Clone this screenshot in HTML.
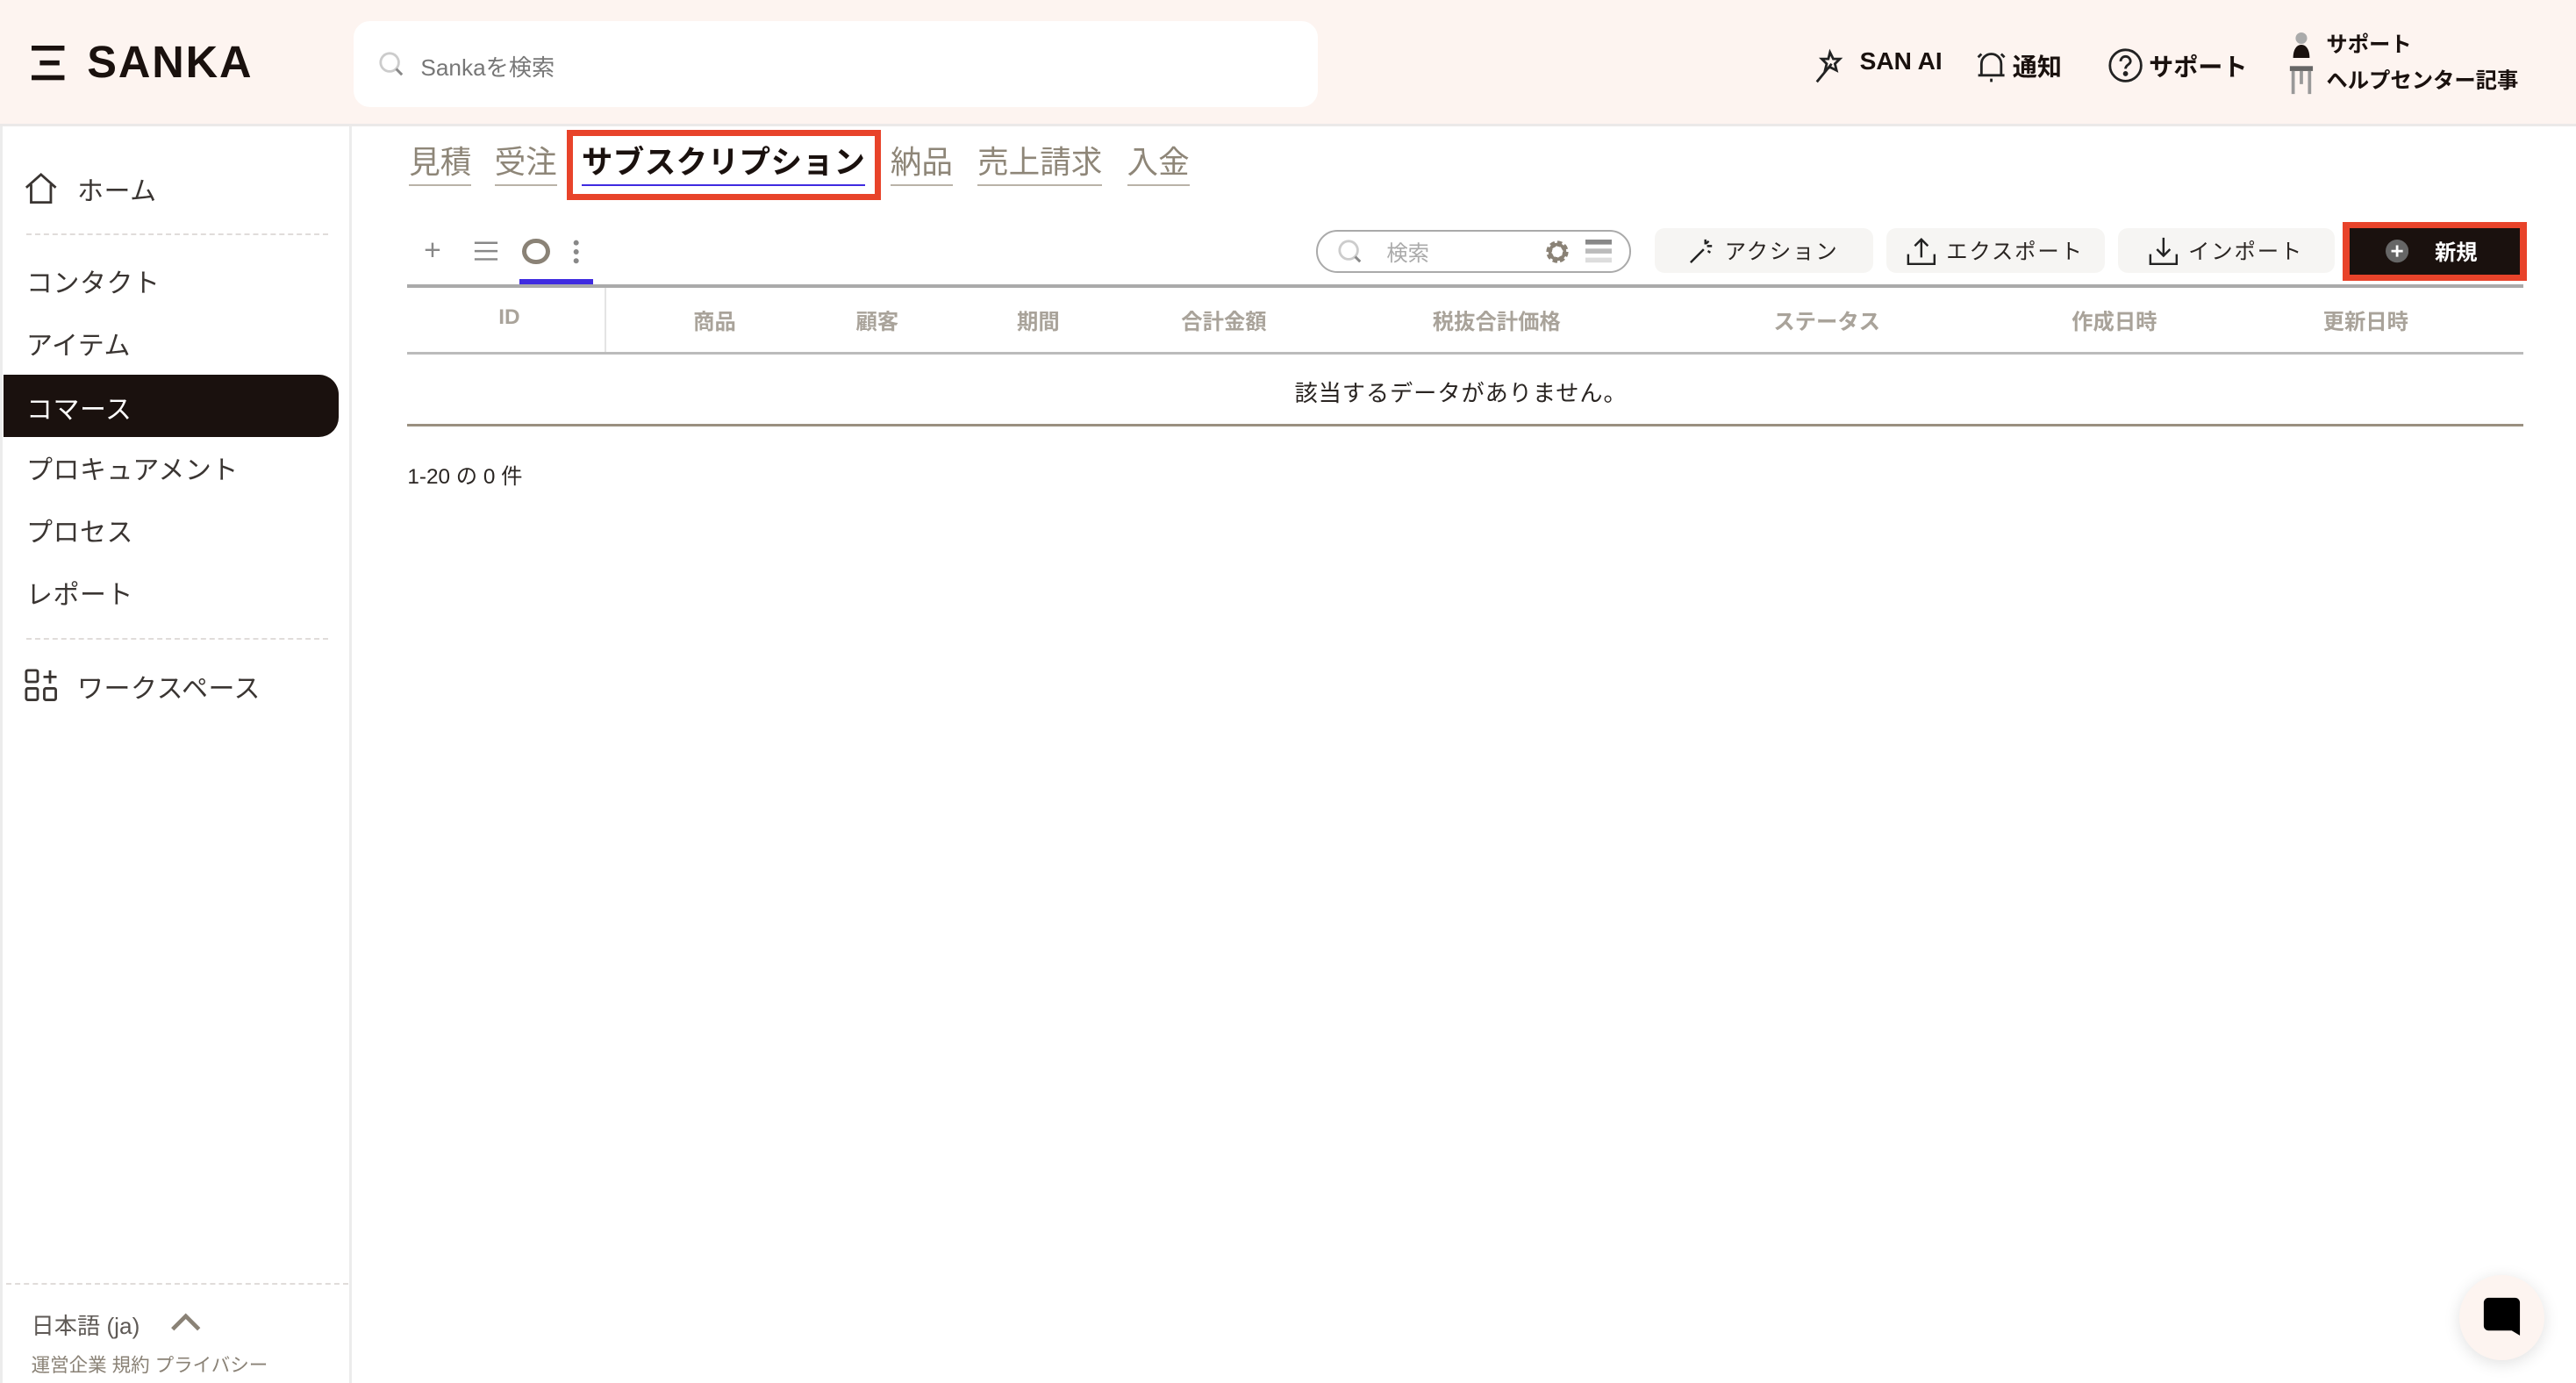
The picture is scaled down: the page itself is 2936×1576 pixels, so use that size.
<!DOCTYPE html>
<html><head><meta charset="utf-8"><style>
*{margin:0;padding:0;box-sizing:border-box}
html,body{width:2936px;height:1576px;overflow:hidden;background:#fff}
#r{zoom:1.87245;width:1568px;height:842px;position:relative;font-family:"Liberation Sans","Noto Sans CJK JP",sans-serif;color:#2a2522}
.a{position:absolute;white-space:nowrap}
.hdr{left:0;top:0;width:1568px;height:77px;background:#fdf4f0;border-bottom:2px solid #ebe9e8}
.side{left:0;top:77px;width:214px;height:765px;border-right:2px solid #ececec;border-left:2px solid #ececec}
.nav{font-size:16px;color:#3a3532;letter-spacing:.3px;left:16px}
.dash{left:16px;width:184px;border-top:1.5px dashed #e0dcda}
.tab{font-size:19px;color:#8e8678;top:86px;border-bottom:1.5px solid #b9b2a8;line-height:26px}
.th{font-size:13px;color:#a9a39a;top:186px;transform:translateX(-50%);font-weight:bold}
.btn{top:139px;height:27px;background:#f6f5f3;border-radius:6px;font-size:13px;color:#2a2522;display:flex;align-items:center;justify-content:center;gap:6px;letter-spacing:1px}
</style></head><body><div id="r">
<div class="a hdr"></div>
<svg class="a" style="left:19px;top:28px" width="22" height="22" viewBox="0 0 22 22"><rect x="0" y="0" width="20" height="3" fill="#1a110e"/><rect x="5" y="9" width="12" height="3" fill="#1a110e"/><rect x="0" y="18" width="20" height="3" fill="#1a110e"/></svg>
<div class="a" style="left:53px;top:22px;font-size:27px;font-weight:bold;letter-spacing:1px;color:#1a110e">SANKA</div>
<div class="a" style="left:215px;top:13px;width:587px;height:52px;background:#fff;border-radius:10px"></div>
<svg class="a" style="left:230px;top:31px" width="16" height="16" viewBox="0 0 16 16"><circle cx="7" cy="7" r="5.5" fill="none" stroke="#ccc" stroke-width="1.5"/><path d="M11 11l3.5 3.5" stroke="#888" stroke-width="1.6"/></svg>
<div class="a" style="left:256px;top:30px;font-size:14px;color:#777">Sankaを検索</div>
<svg class="a" style="left:1104px;top:29px" width="22" height="22" viewBox="0 0 22 22" fill="none" stroke="#222" stroke-width="1.5"><path d="M2 21L11 10M10 3l2 4 4 0-3 3 1 4-4-2-3 2 1-4-3-3 4 0z"/></svg>
<div class="a" style="left:1132px;top:29px;font-size:15px;font-weight:bold;color:#1a110e">SAN AI</div>
<svg class="a" style="left:1201px;top:29px" width="22" height="22" viewBox="0 0 22 22" fill="none" stroke="#222" stroke-width="1.5"><path d="M5 17V10a6 6 0 0112 0v7zM3 17h16M11 19v2M3 6l2-2M19 6l-2-2"/></svg>
<div class="a" style="left:1225px;top:29px;font-size:15px;font-weight:bold;color:#1a110e">通知</div>
<svg class="a" style="left:1283px;top:29px" width="22" height="22" viewBox="0 0 22 22" fill="none" stroke="#222" stroke-width="1.5"><circle cx="11" cy="11" r="9.5"/><path d="M8 8.5a3 3 0 116 0c0 2-3 2-3 4.5"/><circle cx="11" cy="16" r=".8" fill="#222"/></svg>
<div class="a" style="left:1308px;top:29px;font-size:15px;font-weight:bold;color:#1a110e">サポート</div>
<svg class="a" style="left:1393px;top:19px" width="16" height="40" viewBox="0 0 16 40"><circle cx="8" cy="4" r="3.5" fill="#aaa"/><path d="M3 16c0-5 2-8 5-8s5 3 5 8z" fill="#1a110e"/><rect x="1" y="21" width="14" height="3" fill="#666"/><path d="M3 24v14M13 24v14M8 24v8" stroke="#999" stroke-width="2"/></svg>
<div class="a" style="left:1416px;top:17px;font-size:13px;font-weight:bold;color:#1a110e">サポート</div>
<div class="a" style="left:1416px;top:39px;font-size:13px;font-weight:bold;color:#1a110e">ヘルプセンター記事</div>

<div class="a side"></div>
<svg class="a" style="left:15px;top:105px" width="20" height="19" viewBox="0 0 20 19" fill="none" stroke="#3a3532" stroke-width="1.5"><path d="M1 9L10 1l9 8M4 7v11h12V7"/></svg>
<div class="a nav" style="left:47px;top:103px">ホーム</div>
<div class="a dash" style="top:142px"></div>
<div class="a nav" style="top:159px">コンタクト</div>
<div class="a nav" style="top:197px">アイテム</div>
<div class="a" style="left:2px;top:228px;width:204px;height:38px;background:#1a110e;border-radius:0 12px 12px 0"></div>
<div class="a nav" style="top:236px;color:#fff">コマース</div>
<div class="a nav" style="top:273px">プロキュアメント</div>
<div class="a nav" style="top:311px">プロセス</div>
<div class="a nav" style="top:349px">レポート</div>
<div class="a dash" style="top:388px"></div>
<svg class="a" style="left:15px;top:407px" width="21" height="21" viewBox="0 0 21 21" fill="none" stroke="#3a3532" stroke-width="1.5"><rect x="1" y="1" width="7" height="7" rx="1"/><rect x="1" y="12" width="7" height="7" rx="1"/><rect x="12" y="12" width="7" height="7" rx="1"/><path d="M15.5 1v8M11.5 5h8"/></svg>
<div class="a nav" style="left:47px;top:406px">ワークスペース</div>
<div class="a dash" style="left:4px;width:208px;top:781px"></div>
<div class="a" style="left:19px;top:796px;font-size:14px;color:#5e5955">日本語 (ja)</div>
<svg class="a" style="left:103px;top:799px" width="20" height="12" viewBox="0 0 20 12"><path d="M2 10l8-8 8 8" fill="none" stroke="#8a8276" stroke-width="2.5"/></svg>
<div class="a" style="left:19px;top:822px;font-size:11.5px;color:#8a8276">運営企業 規約 プライバシー</div>

<div class="a tab" style="left:249px">見積</div>
<div class="a tab" style="left:301px">受注</div>
<div class="a" style="left:345px;top:79px;width:191px;height:43px;border:4px solid #e8432a"></div>
<div class="a" style="left:354px;top:86px;font-size:19px;font-weight:bold;color:#1a110e;line-height:26px;border-bottom:1.5px solid #3f2be0;letter-spacing:.2px">サブスクリプション</div>
<div class="a tab" style="left:542px">納品</div>
<div class="a tab" style="left:595px">売上請求</div>
<div class="a tab" style="left:686px">入金</div>

<div class="a" style="left:258px;top:142px;font-size:18px;color:#888">+</div>
<svg class="a" style="left:288px;top:146px" width="16" height="14" viewBox="0 0 16 14"><path d="M1 2h14M1 7h14M1 12h14" stroke="#888" stroke-width="1.3"/></svg>
<div class="a" style="left:318px;top:145px;width:17px;height:16px;border:3px solid #8a8276;border-radius:50%"></div>
<svg class="a" style="left:348px;top:145px" width="5" height="16"><circle cx="2.5" cy="2.5" r="1.6" fill="#888"/><circle cx="2.5" cy="8" r="1.6" fill="#888"/><circle cx="2.5" cy="13.5" r="1.6" fill="#888"/></svg>
<div class="a" style="left:316px;top:170px;width:45px;height:3px;background:#3f2be0"></div>

<div class="a" style="left:801px;top:140px;width:192px;height:26px;border:1.5px solid #aaa;border-radius:13px"></div>
<svg class="a" style="left:814px;top:145px" width="16" height="16" viewBox="0 0 16 16"><circle cx="7" cy="7" r="5.5" fill="none" stroke="#ccc" stroke-width="1.5"/><path d="M11 11l3 3" stroke="#888" stroke-width="1.6"/></svg>
<div class="a" style="left:844px;top:144px;font-size:13px;color:#aaa">検索</div>
<svg class="a" style="left:940px;top:145px" width="16" height="16" viewBox="0 0 16 16"><circle cx="8" cy="8" r="5" fill="none" stroke="#8a8276" stroke-width="3.5" stroke-dasharray="2.5 1.4"/><circle cx="8" cy="8" r="4.5" fill="none" stroke="#8a8276" stroke-width="2"/></svg>
<svg class="a" style="left:965px;top:146px" width="16" height="14"><rect y="0" width="16" height="3" fill="#888"/><rect y="5.5" width="16" height="3" fill="#bbb"/><rect y="11" width="16" height="3" fill="#ddd"/></svg>
<div class="a btn" style="left:1007px;width:133px"><svg width="16" height="16" viewBox="0 0 16 16" fill="none" stroke="#222" stroke-width="1.3"><path d="M1 15L9 7M10 1v3M14 5h-3M12 2l-1.5 1.5M13 9l-1.5-1"/></svg>アクション</div>
<div class="a btn" style="left:1148px;width:133px"><svg width="18" height="18" viewBox="0 0 18 18" fill="none" stroke="#222" stroke-width="1.3"><path d="M9 13V2M5 6l4-4 4 4M1 11v6h16v-6"/></svg>エクスポート</div>
<div class="a btn" style="left:1289px;width:132px"><svg width="18" height="18" viewBox="0 0 18 18" fill="none" stroke="#222" stroke-width="1.3"><path d="M9 1v11M5 8l4 4 4-4M1 11v6h16v-6"/></svg>インポート</div>
<div class="a" style="left:1426px;top:135px;width:112px;height:36px;background:#e8432a"></div>
<div class="a" style="left:1430px;top:139px;width:104px;height:28px;background:#1a110e;color:#fff;font-size:13px;font-weight:bold;display:flex;align-items:center;gap:16px;padding-left:22px"><svg width="14" height="14" viewBox="0 0 14 14"><circle cx="7" cy="7" r="7" fill="#666"/><path d="M7 3.5v7M3.5 7h7" stroke="#fff" stroke-width="1.5"/></svg>新規</div>

<div class="a" style="left:248px;top:173px;width:1288px;height:2px;background:#aaa"></div>
<div class="a" style="left:368px;top:175px;width:1px;height:40px;background:#e4e4e4"></div>
<div class="a th" style="left:310px">ID</div>
<div class="a th" style="left:435px">商品</div>
<div class="a th" style="left:534px">顧客</div>
<div class="a th" style="left:632px">期間</div>
<div class="a th" style="left:745px">合計金額</div>
<div class="a th" style="left:911px">税抜合計価格</div>
<div class="a th" style="left:1112px">ステータス</div>
<div class="a th" style="left:1287px">作成日時</div>
<div class="a th" style="left:1440px">更新日時</div>
<div class="a" style="left:248px;top:214px;width:1288px;height:1.5px;background:#bbb"></div>
<div class="a" style="left:788px;top:228px;font-size:14px;color:#2a2522;letter-spacing:.5px">該当するデータがありません。</div>
<div class="a" style="left:248px;top:258px;width:1288px;height:1.5px;background:#9a9080"></div>
<div class="a" style="left:248px;top:280px;font-size:13px;color:#2a2522">1-20 の 0 件</div>

<div class="a" style="left:1497px;top:776px;width:52px;height:52px;border-radius:50%;background:#fdf4f0;box-shadow:0 2px 10px rgba(0,0,0,.12)"></div>
<svg class="a" style="left:1511px;top:789px" width="24" height="26" viewBox="0 0 24 26"><path d="M4 1h16a3 3 0 013 3v20l-5-3H4a3 3 0 01-3-3V4a3 3 0 013-3z" fill="#000"/></svg>
</div></body></html>
